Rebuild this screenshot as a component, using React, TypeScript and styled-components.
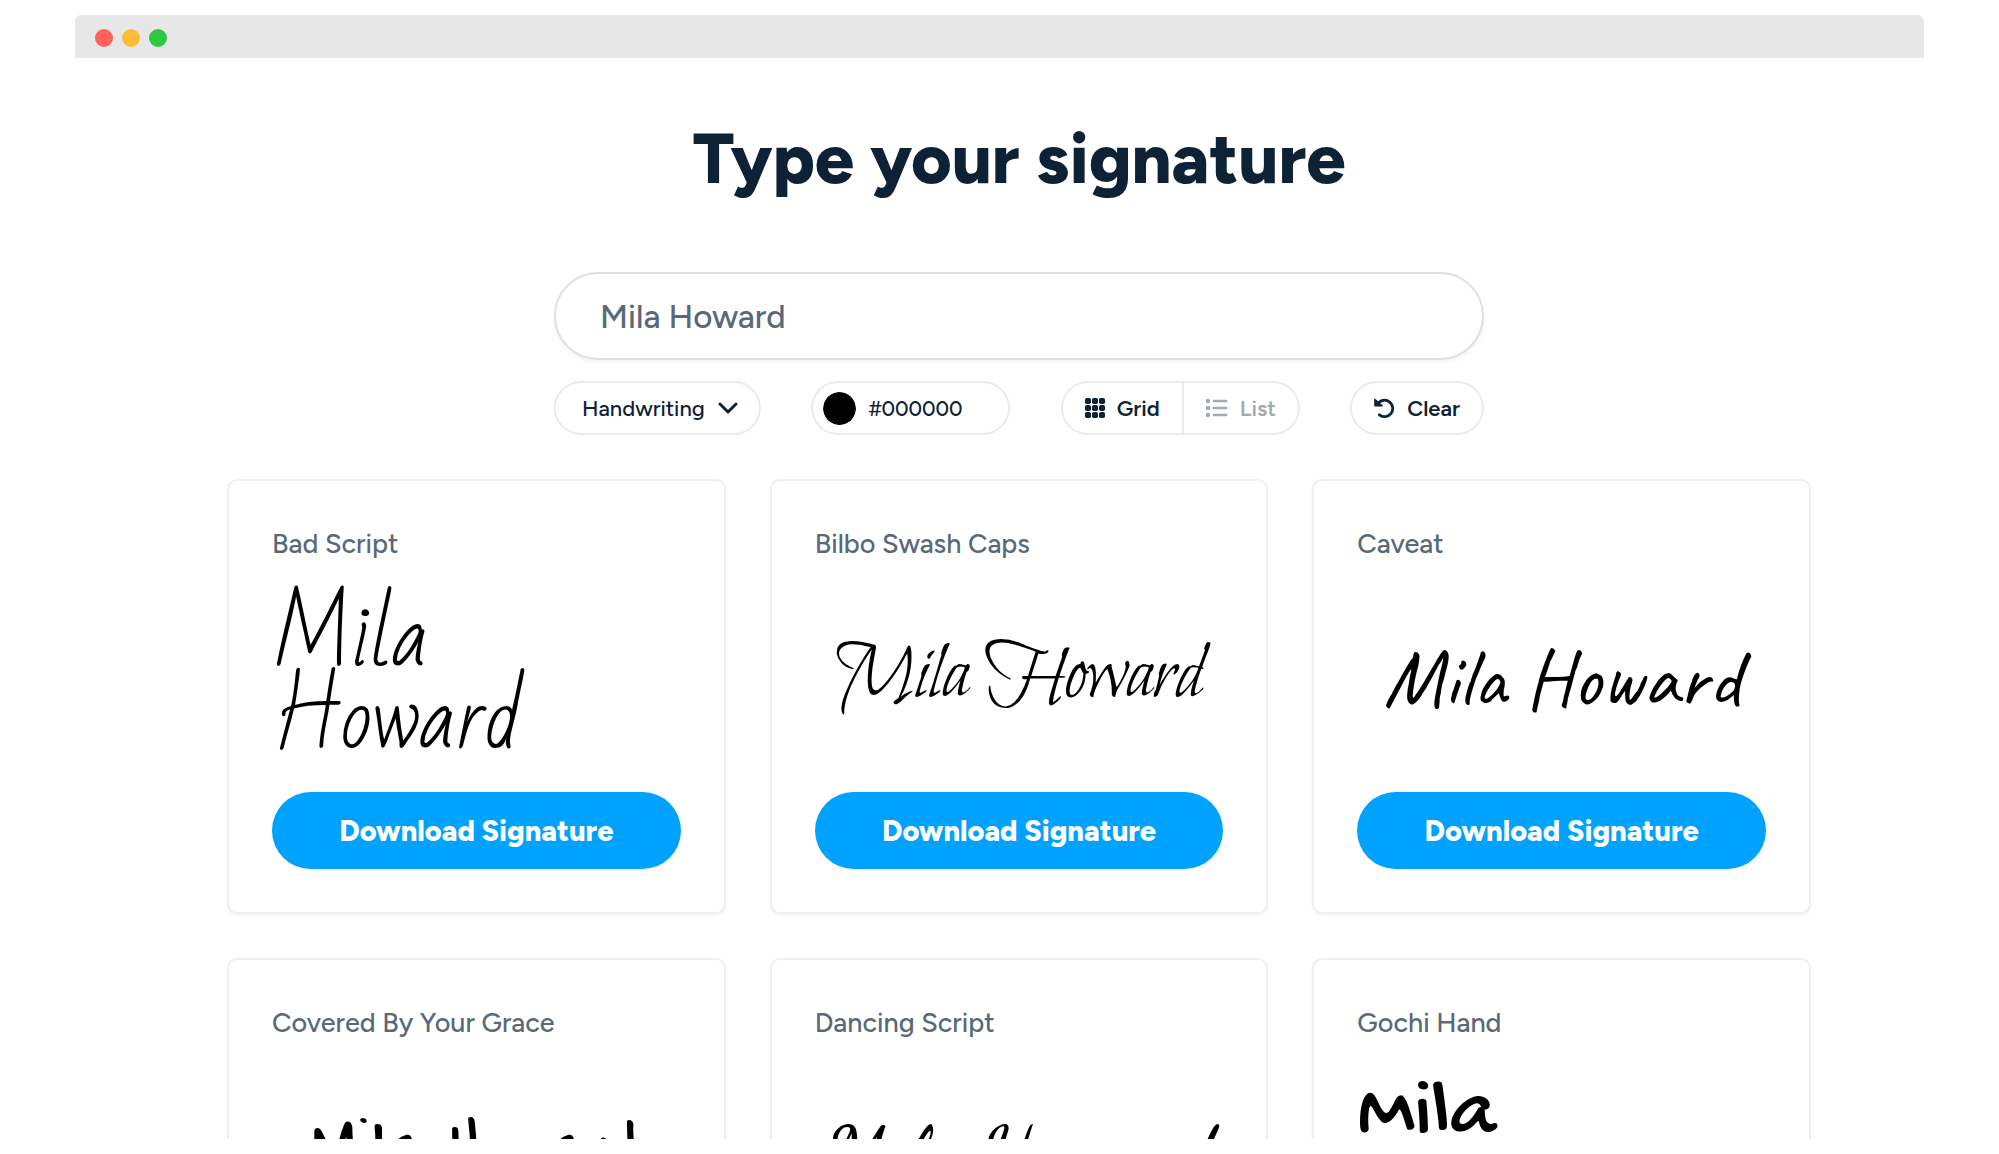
import React, { useState } from "react";
import styled, { createGlobalStyle } from "styled-components";

const ink = "#0d2235";
const muted = "#5a6978";
const line = "#e9ebef";
const ui = `"Figtree", "Lato", "Open Sans", sans-serif`;

const GlobalStyle = createGlobalStyle`
  *, *::before, *::after { box-sizing: border-box; }
  body { margin: 0; background: #fff; color: ${ink}; font-family: ${ui}; }
  button, input, select { font-family: inherit; color: inherit; }
`;

const Stage = styled.div`
  height: 100vh;
  padding: 15px 75px;
`;

const BrowserWindow = styled.div`
  display: flex;
  flex-direction: column;
  height: 100%;
  overflow: hidden;
  border-radius: 6px 6px 0 0;
`;

const TitleBar = styled.div`
  display: flex;
  flex: none;
  align-items: center;
  gap: 9px;
  height: 43px;
  padding: 3px 20px 0;
  background: #e7e7e7;
`;

const Dot = styled.span<{ $color: string }>`
  width: 18px;
  height: 18px;
  border-radius: 50%;
  background: ${(p) => p.$color};
`;

const Page = styled.main`
  flex: 1;
  min-height: 0;
  overflow: hidden;
  padding: 61px 113px 0 152px;
`;

const Heading = styled.h1`
  margin: 0;
  font-size: 70px;
  font-weight: 800;
  line-height: 80px;
  text-align: center;
`;

const Controls = styled.form`
  display: flex;
  flex-direction: column;
  gap: 21px;
  max-width: 930px;
  margin: 73px auto 44px;
`;

const NameInput = styled.input`
  width: 100%;
  height: 88px;
  padding: 0 44px;
  border: 2px solid #dde0e5;
  border-radius: 44px;
  background: #fff;
  box-shadow: 0 2px 4px rgba(13, 34, 53, 0.06);
  color: ${muted};
  font-size: 33px;
  font-weight: 500;
  outline: none;
`;

const Toolbar = styled.div`
  display: flex;
  justify-content: space-between;
  flex-wrap: wrap;
  gap: 16px;
`;

const Pill = styled.div`
  display: flex;
  align-items: center;
  height: 54px;
  border: 2px solid ${line};
  border-radius: 27px;
  background: #fff;
  font-size: 22px;
  overflow: hidden;
`;

const StylePill = styled(Pill)`
  display: grid;
  align-items: center;

  & > * { grid-area: 1 / 1; }
  & > svg { justify-self: end; margin-right: 21px; pointer-events: none; }
`;

const StyleSelect = styled.select`
  width: 203px;
  height: 100%;
  padding: 0 26px;
  border: 0;
  background: transparent;
  appearance: none;
  font-size: 22px;
  font-weight: 500;
  outline: none;
`;

const ColorPill = styled(Pill)`
  width: 199px;
  gap: 12px;
  padding-left: 10px;
`;

const Swatch = styled.input`
  flex: none;
  width: 33px;
  height: 33px;
  padding: 0;
  border: 0;
  border-radius: 50%;
  background: none;
  appearance: none;
  overflow: hidden;

  &::-webkit-color-swatch-wrapper { padding: 0; }
  &::-webkit-color-swatch { border: 0; border-radius: 50%; }
`;

const HexInput = styled.input`
  flex: 1;
  min-width: 0;
  padding: 0;
  border: 0;
  background: none;
  font-size: 21px;
  font-weight: 500;
  outline: none;
`;

const PillButton = styled.button<{ $muted?: boolean }>`
  display: flex;
  align-items: center;
  justify-content: center;
  gap: 12px;
  height: 100%;
  padding: 0 22px;
  border: 0;
  background: none;
  color: ${(p) => (p.$muted ? "#a3a9b0" : ink)};
  font-size: 22px;
  font-weight: 600;

  & + & { border-left: 2px solid ${line}; }
`;

const CardGrid = styled.div`
  display: grid;
  grid-template-columns: repeat(3, minmax(0, 1fr));
  gap: 44px;
`;

const Card = styled.article`
  display: flex;
  flex-direction: column;
  padding: 43px;
  border: 2px solid #edeff2;
  border-radius: 10px;
  background: #fff;
  box-shadow: 0 2px 3px rgba(13, 34, 53, 0.04);
`;

const FontName = styled.h2`
  margin: 0;
  color: ${muted};
  font-size: 27px;
  font-weight: 500;
  line-height: 40px;
`;

const SignatureArea = styled.div`
  display: flex;
  align-items: center;
  justify-content: center;
  height: 200px;
  margin: 14px 0;
`;

const Signature = styled.p<{ $font: string }>`
  margin: 0;
  color: #000;
  font-family: "${(p) => p.$font}", cursive;
  font-size: 82px;
  line-height: 82px;
`;

const DownloadButton = styled.button`
  height: 77px;
  border: 0;
  border-radius: 39px;
  background: #00a2ff;
  color: #fff;
  font-size: 29px;
  font-weight: 800;
`;

const ChevronIcon = () => (
  <svg width="20" height="14" viewBox="0 0 20 14" fill="none" stroke={ink} strokeWidth="3" strokeLinecap="round" strokeLinejoin="round" aria-hidden="true">
    <path d="M2 3l8 8 8-8" />
  </svg>
);

const GridIcon = () => (
  <svg width="20" height="20" viewBox="0 0 20 20" fill="currentColor" aria-hidden="true">
    {[0, 7, 14].map((y) => [0, 7, 14].map((x) => <rect key={`${x}-${y}`} x={x} y={y} width="6" height="6" rx="1.7" />))}
  </svg>
);

const ListIcon = () => (
  <svg width="22" height="20" viewBox="0 0 22 20" fill="currentColor" aria-hidden="true">
    {[1, 8, 15].map((y) => (
      <g key={y}>
        <rect x="0" y={y} width="4" height="4" rx="1" />
        <rect x="6.5" y={y + 0.8} width="15" height="2.4" rx="1.2" />
      </g>
    ))}
  </svg>
);

const UndoIcon = () => (
  <svg width="21" height="20" viewBox="0 0 21 20" aria-hidden="true">
    <path d="M4.2 5.2A8.2 8.2 0 1 1 5.4 16.8" fill="none" stroke="currentColor" strokeWidth="2.8" strokeLinecap="round" />
    <path d="M0.2 1.4Q0.2 -0.2 1.5 0.9L8.6 7.2Q9.4 8.5 8 8.6H1.2Q0.2 8.6 0.2 7.6Z" fill="currentColor" />
  </svg>
);

const fonts = ["Bad Script", "Bilbo Swash Caps", "Caveat", "Covered By Your Grace", "Dancing Script", "Gochi Hand"];

export default function App() {
  const [name, setName] = useState("Mila Howard");
  const [color, setColor] = useState("#000000");
  const [view, setView] = useState("grid");

  return (
    <>
      <GlobalStyle />
      <Stage>
        <BrowserWindow>
          <TitleBar>
            <Dot $color="#ff6259" />
            <Dot $color="#fdbc35" />
            <Dot $color="#2ac845" />
          </TitleBar>
          <Page>
            <Heading>Type your signature</Heading>
            <Controls onSubmit={(e) => e.preventDefault()}>
              <NameInput aria-label="Your name" value={name} onChange={(e) => setName(e.target.value)} />
              <Toolbar>
                <StylePill>
                  <StyleSelect aria-label="Signature style" defaultValue="Handwriting">
                    <option>Handwriting</option>
                  </StyleSelect>
                  <ChevronIcon />
                </StylePill>
                <ColorPill>
                  <Swatch type="color" aria-label="Pick a color" value={color} onChange={(e) => setColor(e.target.value)} />
                  <HexInput aria-label="Hex color" value={color} onChange={(e) => setColor(e.target.value)} />
                </ColorPill>
                <Pill>
                  <PillButton type="button" aria-pressed={view === "grid"} $muted={view !== "grid"} onClick={() => setView("grid")}>
                    <GridIcon />
                    Grid
                  </PillButton>
                  <PillButton type="button" aria-pressed={view === "list"} $muted={view !== "list"} onClick={() => setView("list")}>
                    <ListIcon />
                    List
                  </PillButton>
                </Pill>
                <Pill>
                  <PillButton type="button" onClick={() => setName("")}>
                    <UndoIcon />
                    Clear
                  </PillButton>
                </Pill>
              </Toolbar>
            </Controls>
            <CardGrid>
              {fonts.map((font) => (
                <Card key={font}>
                  <FontName>{font}</FontName>
                  <SignatureArea>
                    <Signature $font={font} style={{ color }}>{name}</Signature>
                  </SignatureArea>
                  <DownloadButton type="button">Download Signature</DownloadButton>
                </Card>
              ))}
            </CardGrid>
          </Page>
        </BrowserWindow>
      </Stage>
    </>
  );
}
